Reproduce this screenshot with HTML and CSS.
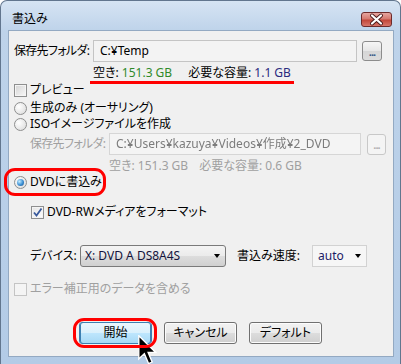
FILE: index.html
```html
<!DOCTYPE html>
<html lang="ja">
<head>
    <meta charset="UTF-8">
    <meta name="viewport" content="width=device-width, initial-scale=1.0">
    <title>書込み</title>
    <link rel="stylesheet" href="styles.css">
</head>
<body>
    <div class="window">
        <div class="titlebar">
            <span class="title">書込み</span>
            <span class="close">
                <svg width="31" height="15" viewBox="0 0 31 15">
                    <path d="M11 3.5 L20 11.5 M20 3.5 L11 11.5" stroke="#4a1c1c" stroke-width="4" stroke-linecap="round"/>
                    <path d="M11 3.5 L20 11.5 M20 3.5 L11 11.5" stroke="#fff" stroke-width="2.2" stroke-linecap="round"/>
                </svg>
            </span>
        </div>

        <div class="client">
            <div class="row folder-row">
                <span class="label">保存先フォルダ:</span>
                <span class="field">C:¥Temp</span>
                <span class="browse">...</span>
            </div>
            <div class="row info-main">
                <span class="mark">空き: <span class="free">151.3 GB</span><span class="need">必要な容量: <span class="size">1.1 GB</span></span></span>
            </div>

            <div class="row preview-row">
                <span class="cb"></span>プレビュー
            </div>
            <div class="row radio-1">
                <span class="radio"></span>生成のみ (オーサリング)
            </div>
            <div class="row radio-2">
                <span class="radio"></span>ISOイメージファイルを作成
            </div>

            <div class="row folder-row sub disabled">
                <span class="label">保存先フォルダ:</span>
                <span class="field"><span class="blurred">C:¥Users¥kazuya¥Videos¥作成¥2_DVD</span></span>
                <span class="browse">...</span>
            </div>
            <div class="row info-sub disabled">
                空き: 151.3 GB<span class="need">必要な容量: 0.6 GB</span>
            </div>

            <div class="row dvd-row">
                <span class="radio on"></span>DVDに書込み
            </div>
            <div class="row format-row">
                <span class="cb on">
                    <svg width="11" height="11" viewBox="0 0 11 11"><path d="M2 5.5 L4.5 8.5 L9.5 1.5" stroke="#3a5a9c" stroke-width="1.8" fill="none"/></svg>
                </span>DVD-RWメディアをフォーマット
            </div>

            <div class="row device-row">
                <span class="dev-label">デバイス:</span>
                <span class="select">X: DVD A DS8A4S<span class="arrow"></span></span>
                <span class="speed-label">書込み速度:</span>
                <span class="combo">auto<span class="arrow"></span></span>
            </div>

            <div class="row ecc-row disabled">
                <span class="cb"></span>エラー補正用のデータを含める
            </div>

            <div class="row buttons">
                <span class="btn start">開始</span>
                <span class="btn">キャンセル</span>
                <span class="btn">デフォルト</span>
            </div>
        </div>

        <svg class="cursor" width="19" height="30" viewBox="0 0 12.6 20">
            <path d="M0.5 0.5 L0.5 16 L4.2 12.4 L7 19 L9.4 18 L6.7 11.6 L11.8 11.6 Z" fill="#000" stroke="#fff" stroke-width="0.9"/>
        </svg>
    </div>
</body>
</html>
```

FILE: styles.css
```css
body {
    margin: 0;
    background-color: #fff;
    font-family: "Noto Sans", "Noto Sans CJK JP", sans-serif;
    font-size: 12px;
    font-feature-settings: "palt";
    color: #000;
}
.window {
    position: relative;
    width: 401px;
    height: 364px;
    box-sizing: border-box;
    border: 1px solid #62768e;
    border-bottom: none;
    border-radius: 7px 7px 0 0;
    background: linear-gradient(#d6e4f3, #bed3ea 30px, #b3cbe6);
    overflow: hidden;
}
.titlebar {
    height: 29px;
    box-sizing: border-box;
    padding: 7px 8px 0 11px;
    display: flex;
    justify-content: space-between;
    align-items: center;
}
.title {
    line-height: 14px;
}
.close {
    width: 31px;
    height: 15px;
    box-sizing: border-box;
    border: 1px solid #6d2b2b;
    border-radius: 3px;
    background: linear-gradient(#e6a6a0, #d57a70 45%, #c2473a 55%, #d8766a);
    display: flex;
}
.close svg {
    margin: -1px;
}
.client {
    margin: 0 6px 0 7px;
    height: 327px;
    box-sizing: border-box;
    border: 1px solid #93a9c2;
    background-color: #f0f0f0;
    padding: 9px 0 0 5px;
}
.row {
    display: flex;
    align-items: center;
    height: 14px;
    line-height: 14px;
    white-space: nowrap;
}
.disabled {
    color: #a0a0a0;
}

/* folder rows */
.folder-row {
    height: 22px;
}
.label {
    width: 79px;
    letter-spacing: -0.7px;
}
.field {
    width: 264px;
    height: 22px;
    box-sizing: border-box;
    border: 1px solid #c4c4c4;
    background-color: #f3f3f3;
    padding: 0 6px;
    line-height: 20px;
    overflow: hidden;
}
.browse {
    width: 20px;
    height: 20px;
    box-sizing: border-box;
    margin-left: 5px;
    border: 1px solid #8c8c8c;
    border-radius: 3px;
    background: linear-gradient(#f6f6f6, #e6e6e6 50%, #d6d6d6 50%, #dcdcdc);
    color: #3b5a8a;
    font-weight: bold;
    font-size: 11px;
    line-height: 20px;
    text-align: center;
    letter-spacing: -1px;
}
.info-main {
    margin-top: 4px;
    margin-left: 79px;
}
.mark {
    position: relative;
}
.mark::after {
    content: "";
    position: absolute;
    left: -3px;
    right: -3px;
    bottom: -4px;
    height: 3px;
    background-color: #f00;
}
.free {
    color: #2f8a2a;
}
.need {
    margin-left: 16px;
}
.size {
    color: #2a2a7e;
}

/* options */
.cb {
    width: 13px;
    height: 13px;
    box-sizing: border-box;
    margin-right: 3px;
    border: 1px solid #8e8f8f;
    background: linear-gradient(135deg, #d4d4d4, #f8f8f8);
    box-shadow: inset 0 0 0 1px #f4f4f4;
    display: flex;
    align-items: center;
    justify-content: center;
}
.cb.on {
    background: linear-gradient(135deg, #e4e4e4, #ffffff);
}
.disabled .cb {
    border-color: #c4c4c4;
    background: #f4f4f4;
}
.radio {
    width: 13px;
    height: 13px;
    box-sizing: border-box;
    margin-right: 3px;
    border: 1px solid #8e8f8f;
    border-radius: 50%;
    background: radial-gradient(circle at 35% 35%, #ffffff, #d8d8d8);
    display: flex;
    align-items: center;
    justify-content: center;
}
.radio.on::before {
    content: "";
    width: 7px;
    height: 7px;
    border-radius: 50%;
    background: radial-gradient(circle at 35% 35%, #c4ecff, #3b8fd4 55%, #1c4f85);
}
.preview-row {
    margin-top: 3px;
}
.radio-1 {
    margin-top: 4px;
}
.radio-2 {
    margin-top: 2px;
}
.sub {
    margin-top: 2px;
    padding-left: 16px;
}
.sub .field {
    width: 252px;
    border-color: #d6d6d6;
    background-color: #f4f4f4;
}
.sub .browse {
    width: 19px;
    height: 21px;
    margin-left: 6px;
    border-color: #c8c8c8;
    background: #f4f4f4;
    color: #b0b0b0;
}
.blurred {
    color: #7c7c7c;
    filter: blur(0.6px);
}
.info-sub {
    margin-top: 4px;
    margin-left: 95px;
}
.info-sub .need {
    margin-left: 11px;
}
.dvd-row {
    position: relative;
    margin-top: 2px;
}
.dvd-row::after {
    content: "";
    position: absolute;
    left: -10px;
    top: -7px;
    width: 102px;
    height: 28px;
    box-sizing: border-box;
    border: 3px solid #f00;
    border-radius: 11px;
}
.format-row {
    margin-top: 16px;
    padding-left: 17px;
}

/* device */
.device-row {
    height: 22px;
    margin-top: 26px;
    padding-left: 16px;
}
.dev-label {
    width: 50px;
}
.select, .combo {
    position: relative;
    height: 22px;
    box-sizing: border-box;
    line-height: 20px;
    color: #14143c;
}
.select {
    width: 146px;
    padding-left: 4px;
    border: 1px solid #7a7a7a;
    border-radius: 3px;
    background: linear-gradient(#f4f4f4, #ebebeb 50%, #dddddd 50%, #d0d0d0);
}
.combo {
    width: 55px;
    padding-left: 5px;
    border: 1px solid #d2d2d2;
    background-color: #f6f6f6;
    color: #1c1c66;
}
.arrow {
    position: absolute;
    right: 5px;
    top: 8px;
    border-top: 4px solid #000;
    border-left: 3.5px solid transparent;
    border-right: 3.5px solid transparent;
}
.speed-label {
    margin-left: 11px;
    width: 75px;
}
.ecc-row {
    margin-top: 15px;
}

/* buttons */
.buttons {
    height: 22px;
    margin-top: 26px;
    padding-left: 65px;
    gap: 12px;
}
.btn {
    width: 73px;
    height: 22px;
    box-sizing: border-box;
    border: 1px solid #707070;
    border-radius: 3px;
    background: linear-gradient(#f2f2f2, #ebebeb 50%, #dddddd 50%, #cfcfcf);
    box-shadow: inset 0 0 0 1px #fcfcfc;
    text-align: center;
    line-height: 20px;
}
.btn.start {
    position: relative;
    border-color: #3c7fb1;
    background: linear-gradient(#eaf6fd, #d9f0fc 50%, #bee6fd 50%, #a7d9f5);
    box-shadow: inset 1px 0 0 #3c7fb1, inset -1px 0 0 #3c7fb1;
}
.btn.start::after {
    content: "";
    position: absolute;
    left: -7px;
    top: -5px;
    right: -6px;
    bottom: -5px;
    border: 3px solid #f00;
    border-radius: 11px;
    z-index: 2;
}
.cursor {
    position: absolute;
    left: 137px;
    top: 334px;
    z-index: 1;
}
```
